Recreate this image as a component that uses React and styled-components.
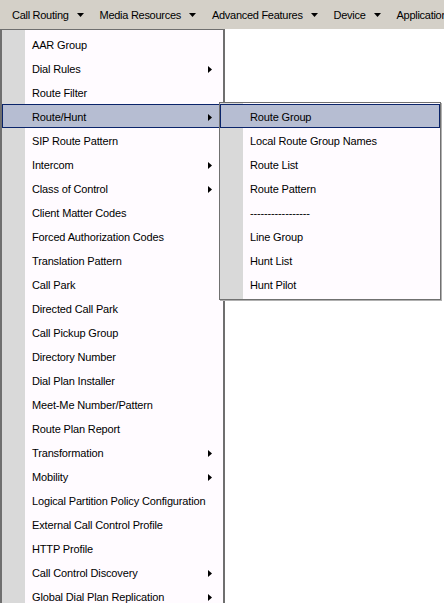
import React from "react";
import styled, { createGlobalStyle } from "styled-components";

const Global = createGlobalStyle`
  html, body {
    margin: 0;
    padding: 0;
    background: #ffffff;
    height: 603px;
    overflow: hidden;
  }
  body {
    font-family: "Liberation Sans", Arial, sans-serif;
    font-size: 11px;
    color: #000;
  }
`;

const Bar = styled.div`
  display: flex;
  align-items: center;
  height: 29px;
  padding-left: 4px;
  background: #d4d0c8;
  white-space: nowrap;
  overflow: hidden;
`;

const BarItem = styled.div`
  display: flex;
  align-items: center;
  padding: 0 8px;
  font-size: 11px;
  letter-spacing: -0.28px;
  height: 100%;
`;

const Caret = styled.svg`
  margin-left: 8px;
  width: 7px;
  height: 4px;
`;

const Page = styled.div`
  position: relative;
  height: 574px;
`;

const Menu = styled.div`
  position: absolute;
  left: 0;
  top: 0;
  width: 221px;
  padding: 2px 0 1px;
  border-style: solid;
  border-color: #6f6f6f;
  border-width: 1px 2px 0 2px;
  background: linear-gradient(to right, #d9d9d9 0 23px, #fffbff 23px);
`;

const Row = styled.div`
  position: relative;
  display: flex;
  align-items: center;
  box-sizing: border-box;
  height: 24px;
  padding-top: 2px;
  padding-left: ${(p) => p.$indent}px;
  padding-right: 10px;
  white-space: nowrap;
  letter-spacing: -0.15px;
  border: 1px solid ${(p) => (p.$active ? "#0a246a" : "transparent")};
  background: ${(p) => (p.$active ? "#b6bdd2" : "transparent")};
`;

const Label = styled.span`
  flex: 1;
`;

const Arrow = styled.svg`
  width: 4px;
  height: 7px;
`;

const SubMenu = styled.div`
  position: absolute;
  left: 216px;
  top: -3px;
  width: 220px;
  padding: 1px 0 3px;
  border: 1px solid #707070;
  background: linear-gradient(to right, #d9d9d9 0 23px, #fffbff 23px);
  box-shadow: 1px 1px 0 #b0b0b0;
  z-index: 2;
`;

const mainItems = [
  { label: "AAR Group" },
  { label: "Dial Rules", sub: true },
  { label: "Route Filter" },
  { label: "Route/Hunt", sub: true, open: true },
  { label: "SIP Route Pattern" },
  { label: "Intercom", sub: true },
  { label: "Class of Control", sub: true },
  { label: "Client Matter Codes" },
  { label: "Forced Authorization Codes" },
  { label: "Translation Pattern" },
  { label: "Call Park" },
  { label: "Directed Call Park" },
  { label: "Call Pickup Group" },
  { label: "Directory Number" },
  { label: "Dial Plan Installer" },
  { label: "Meet-Me Number/Pattern" },
  { label: "Route Plan Report" },
  { label: "Transformation", sub: true },
  { label: "Mobility", sub: true },
  { label: "Logical Partition Policy Configuration" },
  { label: "External Call Control Profile" },
  { label: "HTTP Profile" },
  { label: "Call Control Discovery", sub: true },
  { label: "Global Dial Plan Replication", sub: true },
];

const subItems = [
  "Route Group",
  "Local Route Group Names",
  "Route List",
  "Route Pattern",
  "-----------------",
  "Line Group",
  "Hunt List",
  "Hunt Pilot",
];

const barItems = ["Call Routing", "Media Resources", "Advanced Features", "Device", "Application"];

function DownCaret() {
  return (
    <Caret viewBox="0 0 7 4">
      <polygon points="0,0 7,0 3.5,4" fill="#000" />
    </Caret>
  );
}

function RightArrow() {
  return (
    <Arrow viewBox="0 0 4 7">
      <polygon points="0,0 4,3.5 0,7" fill="#000" />
    </Arrow>
  );
}

export default function App() {
  return (
    <>
      <Global />
      <Bar>
        {barItems.map((b) => (
          <BarItem key={b}>
            {b}
            <DownCaret />
          </BarItem>
        ))}
      </Bar>
      <Page>
        <Menu>
          {mainItems.map((item) => (
            <Row key={item.label} $indent={29} $active={item.open}>
              <Label>{item.label}</Label>
              {item.sub && <RightArrow />}
              {item.open && (
                <SubMenu>
                  {subItems.map((s, i) => (
                    <Row key={s} $indent={29} $active={i === 0}>
                      <Label>{s}</Label>
                    </Row>
                  ))}
                </SubMenu>
              )}
            </Row>
          ))}
        </Menu>
      </Page>
    </>
  );
}
